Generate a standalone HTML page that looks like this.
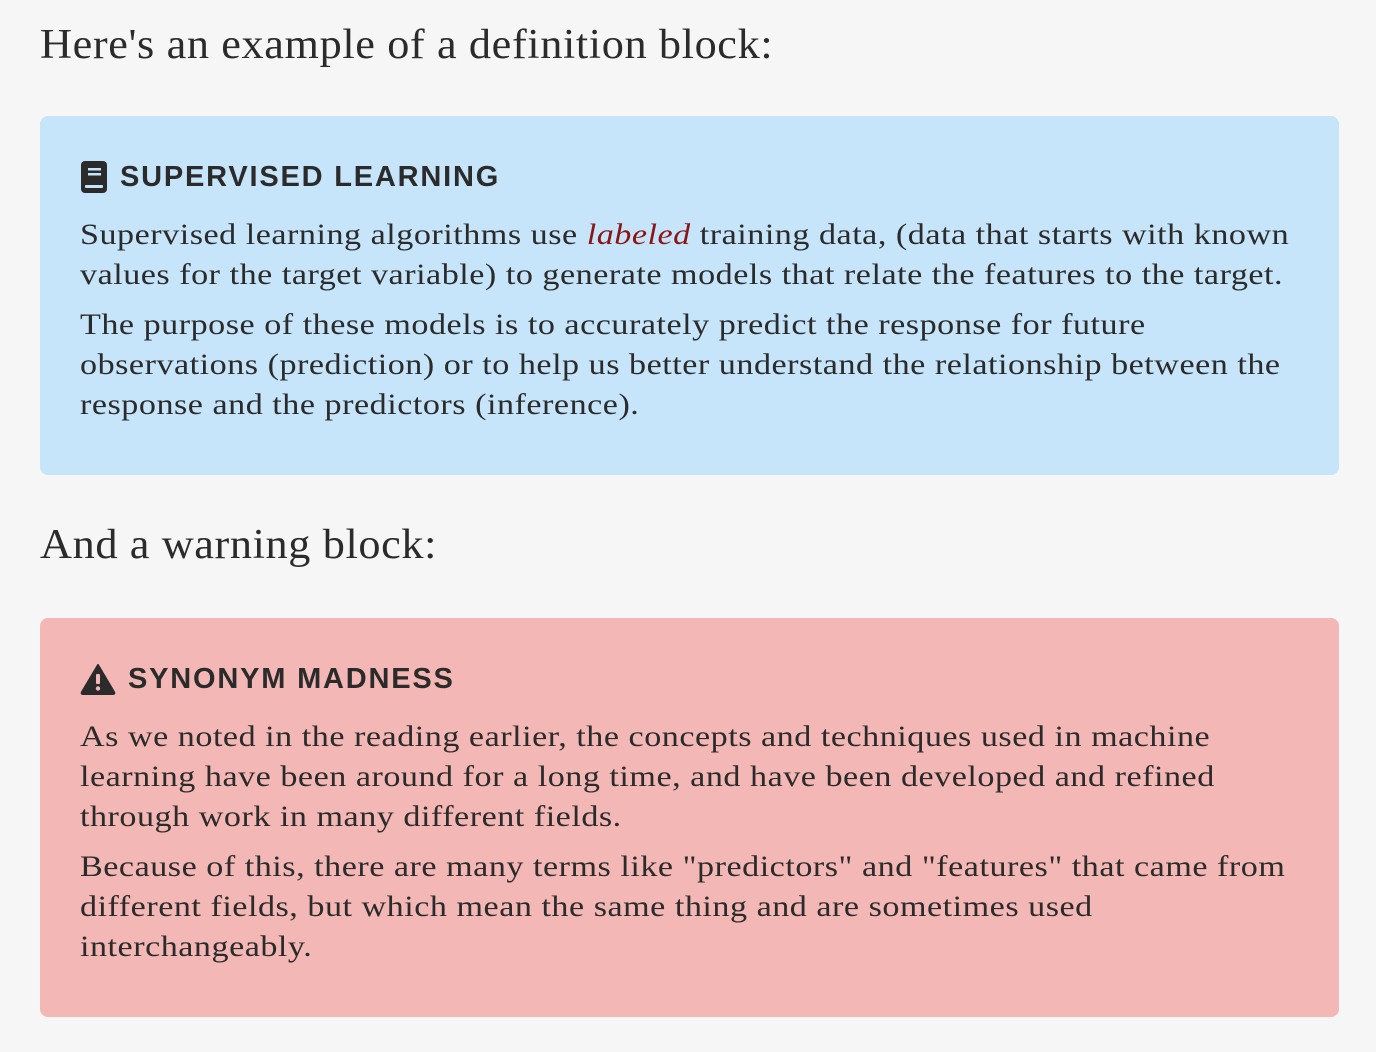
<!DOCTYPE html>
<html><head><style>
body{margin:0;background:#f6f6f6;width:1376px;height:1052px;overflow:hidden;font-family:"Liberation Serif",serif;color:#2b2b2b}
h2{position:absolute;left:40px;margin:0;font-weight:normal;font-size:42px;letter-spacing:0.6px;line-height:50px;white-space:nowrap;transform:scaleX(1.053);transform-origin:0 0}
.box{position:absolute;left:40px;width:1299px;border-radius:8px;box-sizing:border-box;padding:0 40px}
.t{position:absolute;left:40px;font-family:"Liberation Sans",sans-serif;font-weight:bold;font-size:29px;letter-spacing:1.8px;line-height:40px;display:flex;align-items:center;gap:12px;color:#2b2b2b;white-space:nowrap}
.p{position:absolute;left:40px;font-size:30px;letter-spacing:0.45px;line-height:40px;white-space:nowrap;transform:scaleX(1.137);transform-origin:0 0}
em{color:#8b1515}
</style></head><body>
<h2 style="top:20px">Here's an example of a definition block:</h2>
<div class="box" style="top:116px;height:359px;background:#c6e4fa">
<div class="t" style="top:41px"><svg width="28" height="32" viewBox="0 0 28 32"><rect x="1" y="0" width="26" height="32" rx="4" fill="#2b2b2b"/><rect x="8" y="7" width="13" height="2.5" fill="#c6e4fa"/><rect x="8" y="12" width="13" height="2.5" fill="#c6e4fa"/><rect x="5" y="24" width="18" height="3" rx="1" fill="#c6e4fa"/></svg>SUPERVISED LEARNING</div>
<div class="p" style="top:99px">Supervised learning algorithms use <em>labeled</em> training data, (data that starts with known<br>values for the target variable) to generate models that relate the features to the target.</div>
<div class="p" style="top:189px">The purpose of these models is to accurately predict the response for future<br>observations (prediction) or to help us better understand the relationship between the<br>response and the predictors (inference).</div>
</div>
<h2 style="top:520px">And a warning block:</h2>
<div class="box" style="top:618px;height:399px;background:#f3b8b5">
<div class="t" style="top:41px"><svg width="36" height="32" viewBox="0 0 36 32"><path d="M18 2 L34 29 Q35 31 33 31 L3 31 Q1 31 2 29 Z" fill="#2b2b2b" stroke="#2b2b2b" stroke-width="2" stroke-linejoin="round"/><rect x="16" y="11" width="4" height="10" rx="1" fill="#f3b8b5"/><circle cx="18" cy="25.5" r="2.2" fill="#f3b8b5"/></svg>SYNONYM MADNESS</div>
<div class="p" style="top:99px">As we noted in the reading earlier, the concepts and techniques used in machine<br>learning have been around for a long time, and have been developed and refined<br>through work in many different fields.</div>
<div class="p" style="top:229px">Because of this, there are many terms like "predictors" and "features" that came from<br>different fields, but which mean the same thing and are sometimes used<br>interchangeably.</div>
</div>
</body></html>
